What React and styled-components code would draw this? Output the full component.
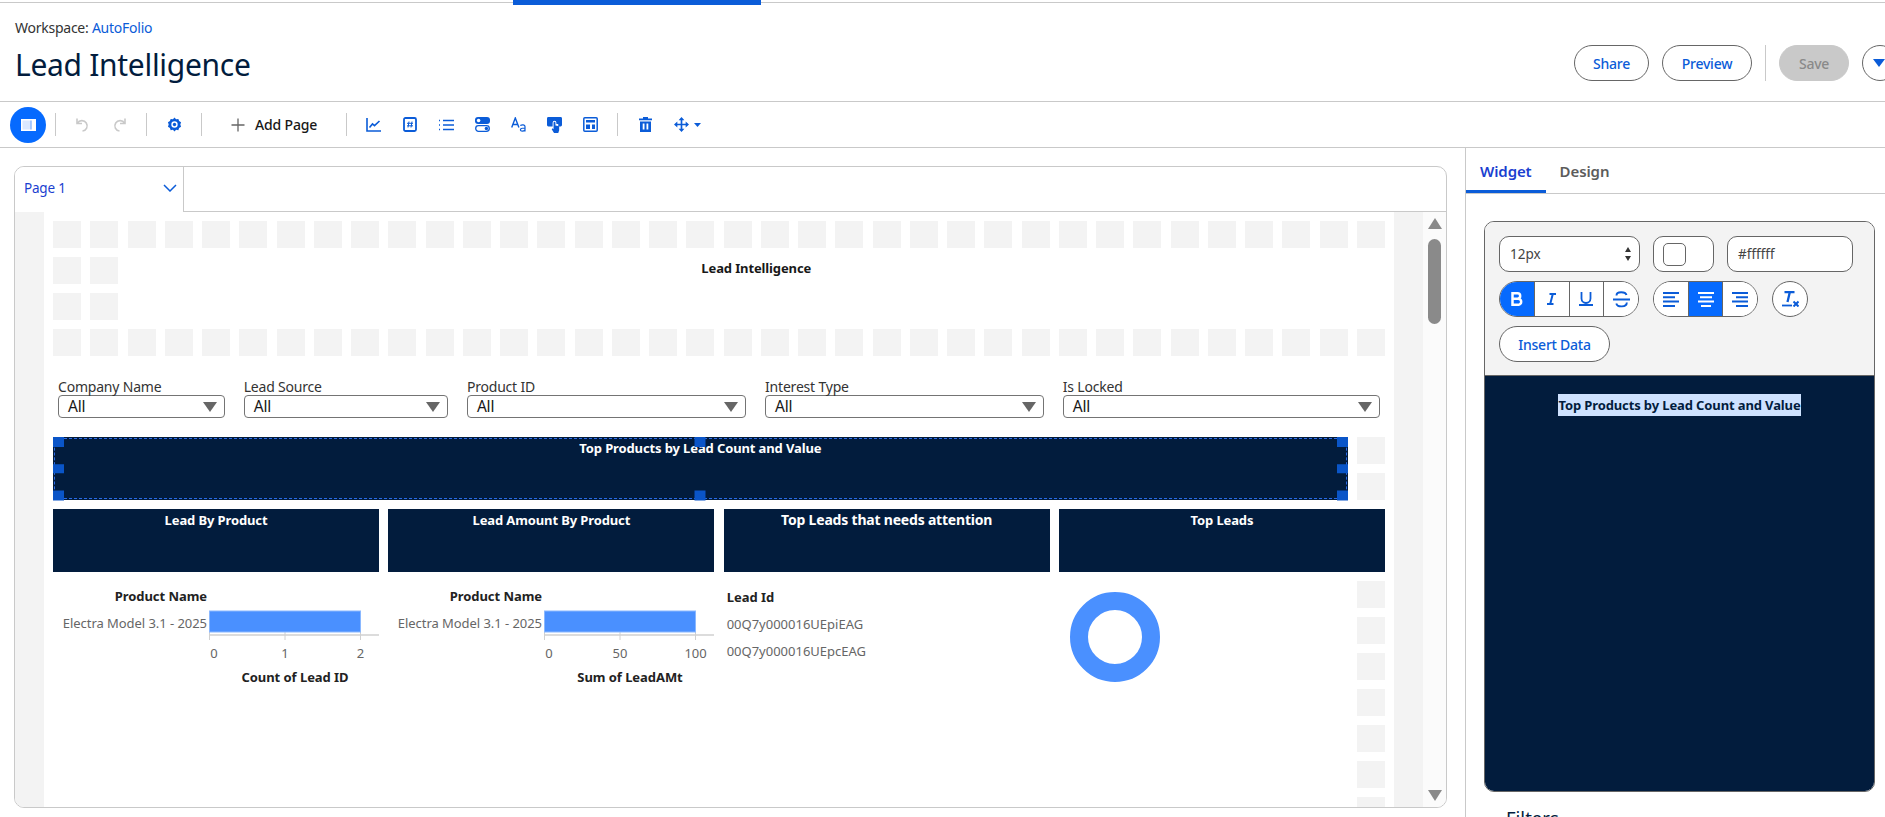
import styled, { createGlobalStyle } from 'styled-components';

const NAVY = '#021c3d';
const BLUE = '#0b5cd8';
const ACTIVE = '#066afe';
const CHART = '#4a90ff';
const CELL = '#f3f3f3';

const GlobalStyle = createGlobalStyle`
  html, body {
    margin: 0;
    height: 100%;
    overflow: hidden;
    background: #fff;
    font-family: "Noto Sans", "Open Sans", "Liberation Sans", sans-serif;
  }
`;

const Page = styled.div`
  width: 1885px;
  height: 817px;
  overflow: hidden;
  display: flex;
  flex-direction: column;
`;

const TopStrip = styled.div`
  height: 2px;
  border-bottom: 1px solid #c9c9c9;
  flex: none;
  padding-left: 513px;
  .bar {
    width: 248px;
    height: 5px;
    background: ${BLUE};
  }
`;

const Header = styled.header`
  height: 99px;
  flex: none;
  box-sizing: border-box;
  border-bottom: 1px solid #c9c9c9;
  display: flex;
  justify-content: space-between;
  padding-left: 15px;
`;

const Crumb = styled.div`
  font-size: 14px;
  letter-spacing: -0.25px;
  color: #333;
  margin-top: 16px;
  line-height: 18px;
  a {
    color: ${BLUE};
  }
`;

const Title = styled.h1`
  font-size: 30px;
  font-weight: 400;
  letter-spacing: -0.3px;
  color: ${NAVY};
  margin: 7px 0 0;
  line-height: 42px;
`;

const Actions = styled.div`
  display: flex;
  align-items: center;
  gap: 13px;
  margin-top: 42px;
  height: 36px;
  flex: none;
`;

const Pill = styled.button`
  height: 36px;
  box-sizing: border-box;
  width: ${(p) => p.$w}px;
  flex: none;
  padding: 0;
  border-radius: 18px;
  border: 1px solid ${(p) => (p.$disabled ? '#c9c9c9' : '#666')};
  background: ${(p) => (p.$disabled ? '#c9c9c9' : '#fff')};
  color: ${(p) => (p.$disabled ? '#8a8a8a' : BLUE)};
  font: 500 14px "Noto Sans", sans-serif;
  letter-spacing: -0.25px;
  display: flex;
  align-items: center;
  justify-content: ${(p) => (p.$start ? 'flex-start' : 'center')};
  padding-left: ${(p) => (p.$start ? '10px' : '0')};
  margin-right: ${(p) => (p.$start ? '-13px' : '0')};
`;

const HeaderSep = styled.div`
  width: 1px;
  height: 36px;
  background: #c9c9c9;
  flex: none;
`;

const Toolbar = styled.div`
  height: 46px;
  flex: none;
  box-sizing: border-box;
  border-bottom: 1px solid #c9c9c9;
  display: flex;
  align-items: center;
`;

const PanelToggle = styled.button`
  width: 36px;
  height: 36px;
  margin-left: 10px;
  padding: 0;
  border: 0;
  border-radius: 50%;
  background: ${ACTIVE};
  display: flex;
  align-items: center;
  justify-content: center;
`;

const ToolSep = styled.div`
  width: 1px;
  height: 23px;
  background: #c9c9c9;
  flex: none;
  margin-left: ${(p) => p.$ml}px;
`;

const ToolIcon = styled.span`
  width: 20px;
  height: 20px;
  flex: none;
  display: flex;
  align-items: center;
  justify-content: center;
  margin-left: ${(p) => p.$ml}px;
  color: ${(p) => p.$color || BLUE};
`;

const AddPage = styled.span`
  font-size: 14px;
  font-weight: 500;
  letter-spacing: -0.15px;
  color: #181818;
  margin-left: 7px;
  width: 91px;
  flex: none;
`;

const Caret = styled.svg`
  margin-left: 3px;
  flex: none;
`;

const Main = styled.div`
  flex: 1;
  min-height: 0;
  display: flex;
`;

const Canvas = styled.section`
  width: 1466px;
  flex: none;
  box-sizing: border-box;
  border-right: 1px solid #c9c9c9;
  padding: 18px 18px 0 14px;
`;

const Card = styled.div`
  height: 642px;
  box-sizing: border-box;
  border: 1px solid #c9c9c9;
  border-radius: 10px;
  overflow: hidden;
  display: flex;
  flex-direction: column;
`;

const TabRow = styled.div`
  height: 45px;
  flex: none;
  box-sizing: border-box;
  border-bottom: 1px solid #c9c9c9;
  display: flex;
`;

const PageTab = styled.div`
  width: 169px;
  height: 45px;
  box-sizing: border-box;
  background: #fff;
  border-right: 1px solid #c9c9c9;
  display: flex;
  align-items: center;
  justify-content: space-between;
  padding: 0 6px 4px 9px;
  font-size: 13.5px;
  letter-spacing: -0.2px;
  color: #1b3fd0;
`;

const Stage = styled.div`
  flex: 1;
  min-height: 0;
  display: flex;
  overflow: hidden;
`;

const Gutter = styled.div`
  width: ${(p) => p.$w}px;
  flex: none;
  background: ${CELL};
`;

const GridArea = styled.div`
  width: 1350px;
  flex: none;
  box-sizing: border-box;
  padding: 9px;
  overflow: hidden;
`;

const GridBoard = styled.div`
  display: grid;
  grid-template-columns: repeat(36, 1fr);
  grid-auto-rows: 27px;
  column-gap: 9.25px;
  row-gap: 9px;
`;

const Cell = styled.div`
  background: ${CELL};
`;

const Widget = styled.div`
  grid-column: ${(p) => p.$col} / span ${(p) => p.$cols};
  grid-row: ${(p) => p.$row} / span ${(p) => p.$rows};
  position: relative;
  min-width: 0;
  background: ${(p) => (p.$dark ? NAVY : '#fff')};
`;

const WidgetTitle = styled.div`
  text-align: center;
  font-weight: 700;
  font-size: ${(p) => p.$size || 13}px;
  letter-spacing: ${(p) => (p.$size ? '-0.2px' : '-0.12px')};
  line-height: 18px;
  padding-top: 2px;
  color: ${(p) => (p.$dark ? '#fff' : '#181818')};
`;

const Dashed = styled.div`
  position: absolute;
  inset: 1px;
  border: 1px dashed #2a6be8;
  pointer-events: none;
`;

const Handle = styled.div`
  position: absolute;
  width: 11px;
  height: 9.5px;
  background: #0a55c8;
  left: ${(p) => p.$x};
  top: ${(p) => p.$y};
  transform: translate(${(p) => p.$tx}, ${(p) => p.$ty});
`;

const FilterRow = styled.div`
  display: flex;
  gap: 18.7px;
  padding: 13px 0 0 5px;
`;

const Filter = styled.label`
  width: ${(p) => p.$w}px;
  flex: none;
  font-size: 14px;
  letter-spacing: -0.2px;
  line-height: 17px;
  color: #333;
  display: block;
`;

const FakeSelect = styled.div`
  height: 23px;
  box-sizing: border-box;
  border: 1px solid #747474;
  border-radius: 4px;
  background: #fff;
  display: flex;
  align-items: center;
  justify-content: space-between;
  padding: 0 7px 0 9px;
  font-size: 15.5px;
  color: #181818;
  i {
    width: 0;
    height: 0;
    border-left: 7px solid transparent;
    border-right: 7px solid transparent;
    border-top: 10px solid #666;
  }
`;

const ChartWrap = styled.svg`
  display: block;
  text {
    font-family: "Noto Sans", sans-serif;
    font-size: 13px;
    letter-spacing: -0.05px;
    fill: #666;
  }
  text.bold {
    font-weight: 700;
    fill: #222;
  }
`;

const Donut = styled.svg`
  display: block;
`;

const LeadTable = styled.div`
  padding: 3px 0 0 3px;
  font-size: 13px;
  color: #666;
  line-height: 27px;
  b {
    color: #222;
    display: block;
  }
`;

const ScrollTrack = styled.div`
  width: 23px;
  flex: none;
  background: #fbfbfb;
  display: flex;
  flex-direction: column;
  align-items: center;
  padding-top: 6px;
  box-sizing: border-box;
  position: relative;
`;

const ScrollUp = styled.div`
  width: 0;
  height: 0;
  border-left: 7px solid transparent;
  border-right: 7px solid transparent;
  border-bottom: 11px solid #8a8a8a;
`;

const ScrollDown = styled(ScrollUp)`
  position: absolute;
  bottom: 6px;
  left: 4.5px;
  border-bottom: 0;
  border-top: 11px solid #8a8a8a;
`;

const ScrollThumb = styled.div`
  width: 13px;
  height: 85px;
  margin-top: 10px;
  border-radius: 7px;
  background: #8a8a8a;
`;

const Side = styled.aside`
  flex: 1;
  min-width: 0;
  display: flex;
  flex-direction: column;
`;

const SideTabs = styled.div`
  height: 46px;
  flex: none;
  box-sizing: border-box;
  border-bottom: 1px solid #c9c9c9;
  display: flex;
`;

const SideTab = styled.div`
  height: 45px;
  box-sizing: border-box;
  padding: 3px 14px 0;
  display: flex;
  align-items: center;
  font-size: 15px;
  font-weight: 600;
  letter-spacing: -0.1px;
  color: ${(p) => (p.$active ? '#1b3fd0' : '#5c5c5c')};
  border-bottom: 3px solid ${(p) => (p.$active ? BLUE : 'transparent')};
`;

const Editor = styled.div`
  margin: 27px 0 0 18px;
  width: 391px;
  height: 571px;
  flex: none;
  box-sizing: border-box;
  border: 1px solid #666;
  border-radius: 10px;
  overflow: hidden;
  display: flex;
  flex-direction: column;
`;

const EditorTools = styled.div`
  height: 154px;
  flex: none;
  box-sizing: border-box;
  background: #f3f3f3;
  border-bottom: 1px solid #666;
  padding: 14px 14px 0;
  display: flex;
  flex-direction: column;
  gap: 9px;
`;

const ToolRow = styled.div`
  display: flex;
  gap: ${(p) => p.$gap || 13}px;
`;

const Field = styled.div`
  width: ${(p) => p.$w}px;
  height: 36px;
  flex: none;
  box-sizing: border-box;
  border: 1px solid #666;
  border-radius: 10px;
  background: #fff;
  display: flex;
  align-items: center;
  justify-content: space-between;
  padding: 0 8px 0 10px;
  font-size: 13.5px;
  color: #444;
`;

const Spinner = styled.div`
  display: flex;
  flex-direction: column;
  gap: 4px;
  i {
    width: 0;
    height: 0;
    border-left: 3px solid transparent;
    border-right: 3px solid transparent;
  }
  i:first-child {
    border-bottom: 5px solid #333;
  }
  i:last-child {
    border-top: 5px solid #333;
  }
`;

const Swatch = styled.div`
  width: 23px;
  height: 23px;
  margin-left: -1px;
  box-sizing: border-box;
  border: 1px solid #666;
  border-radius: 5px;
  background: #fff;
`;

const BtnGroup = styled.div`
  display: flex;
  width: ${(p) => p.$w}px;
  height: 36px;
  flex: none;
  box-sizing: border-box;
  border: 1px solid #666;
  border-radius: 18px;
  overflow: hidden;
  background: #fff;
`;

const GroupBtn = styled.div`
  flex: 1;
  box-sizing: border-box;
  display: flex;
  align-items: center;
  justify-content: center;
  background: ${(p) => (p.$on ? ACTIVE : '#fff')};
  color: ${(p) => (p.$on ? '#fff' : BLUE)};
  & + & {
    border-left: 1px solid #666;
  }
`;

const RoundBtn = styled.div`
  width: 36px;
  height: 36px;
  flex: none;
  box-sizing: border-box;
  border: 1px solid #666;
  border-radius: 50%;
  background: #fff;
  color: ${BLUE};
  display: flex;
  align-items: center;
  justify-content: center;
`;

const Preview = styled.div`
  flex: 1;
  background: ${NAVY};
  text-align: center;
  padding-top: 18px;
  font-size: 13px;
  font-weight: 700;
  letter-spacing: -0.12px;
  line-height: 22px;
  span {
    background: #cfe2ff;
    color: ${NAVY};
    display: inline-block;
    height: 22px;
  }
`;

const SideHeading = styled.div`
  margin: 14px 0 0 40px;
  font-size: 18.5px;
  line-height: 24px;
  color: ${NAVY};
`;

// widgets sit on the 36 column board, empty slots are filled by auto placement
const bars = [
  { col: 1, ticks: ['0', '1', '2'], axis: 'Count of Lead ID' },
  { col: 10, ticks: ['0', '50', '100'], axis: 'Sum of LeadAMt' },
];

const filters = [
  { label: 'Company Name', w: 167 },
  { label: 'Lead Source', w: 204.5 },
  { label: 'Product ID', w: 279.5 },
  { label: 'Interest Type', w: 279 },
  { label: 'Is Locked', w: 317.5 },
];

const headers = [
  { col: 1, text: 'Lead By Product' },
  { col: 10, text: 'Lead Amount By Product' },
  { col: 19, text: 'Top Leads that needs attention', size: 14 },
  { col: 28, text: 'Top Leads' },
];

const handles = [
  ['0', '0', '0', '0'], ['50%', '0', '-50%', '0'], ['100%', '0', '-100%', '0'],
  ['0', '50%', '0', '-50%'], ['100%', '50%', '-100%', '-50%'],
  ['0', '100%', '0', '-100%'], ['50%', '100%', '-50%', '-100%'], ['100%', '100%', '-100%', '-100%'],
];

const line = { stroke: 'currentColor', strokeWidth: 1.6, fill: 'none' };

const BarChart = ({ ticks, axis }) => {
  const xs = [156.5, 232, 307.5];
  return (
    <ChartWrap width="326" height="110" viewBox="0 0 326 110">
      <text className="bold" x="154" y="20" textAnchor="end">Product Name</text>
      <text x="154" y="47" textAnchor="end">Electra Model 3.1 - 2025</text>
      <line x1="156.5" y1="54" x2="326" y2="54" stroke="#d0d0d0" strokeWidth="1.5" />
      {xs.map((x) => (
        <line key={x} x1={x} y1="30" x2={x} y2="59" stroke="#d0d0d0" />
      ))}
      <rect x="156.5" y="30" width="151" height="21" fill={CHART} stroke="#8ab8ff" strokeWidth="1" />
      {ticks.map((t, i) => (
        <text key={t} x={i === 0 ? 161 : xs[i]} y="77" textAnchor="middle">{t}</text>
      ))}
      <text className="bold" x="242" y="101" textAnchor="middle">{axis}</text>
    </ChartWrap>
  );
};

const Board = () => (
  <GridBoard>
    <Widget $col={3} $cols={34} $row={2} $rows={2}>
      <WidgetTitle>Lead Intelligence</WidgetTitle>
    </Widget>
    <Widget $col={1} $cols={36} $row={5} $rows={2}>
      <FilterRow>
        {filters.map((f) => (
          <Filter key={f.label} $w={f.w}>
            {f.label}
            <FakeSelect>All<i /></FakeSelect>
          </Filter>
        ))}
      </FilterRow>
    </Widget>
    <Widget $col={1} $cols={35} $row={7} $rows={2} $dark>
      <WidgetTitle $dark>Top Products by Lead Count and Value</WidgetTitle>
      <Dashed />
      {handles.map(([x, y, tx, ty]) => (
        <Handle key={x + y} $x={x} $y={y} $tx={tx} $ty={ty} />
      ))}
    </Widget>
    {headers.map((h) => (
      <Widget key={h.col} $col={h.col} $cols={9} $row={9} $rows={2} $dark>
        <WidgetTitle $dark $size={h.size}>{h.text}</WidgetTitle>
      </Widget>
    ))}
    {bars.map((b) => (
      <Widget key={b.col} $col={b.col} $cols={9} $row={11} $rows={7}>
        <BarChart ticks={b.ticks} axis={b.axis} />
      </Widget>
    ))}
    <Widget $col={19} $cols={9} $row={11} $rows={7}>
      <LeadTable>
        <b>Lead Id</b>
        <div>00Q7y000016UEpiEAG</div>
        <div>00Q7y000016UEpcEAG</div>
      </LeadTable>
    </Widget>
    <Widget $col={28} $cols={8} $row={11} $rows={7}>
      <Donut width="110" height="110" viewBox="0 0 110 110">
        <circle cx="56" cy="56" r="36" fill="none" stroke={CHART} strokeWidth="18" />
      </Donut>
    </Widget>
    {Array.from({ length: 36 * 3 + 8 + 2 + 2 + 7 }, (_, i) => <Cell key={i} />)}
  </GridBoard>
);

const App = () => (
  <Page>
    <GlobalStyle />
    <TopStrip><div className="bar" /></TopStrip>
    <Header>
      <div>
        <Crumb>Workspace: <a>AutoFolio</a></Crumb>
        <Title>Lead Intelligence</Title>
      </div>
      <Actions>
        <Pill $w={75}>Share</Pill>
        <Pill $w={90}>Preview</Pill>
        <HeaderSep />
        <Pill $w={70} $disabled>Save</Pill>
        <Pill $w={36} $start>
          <svg width="12" height="8" viewBox="0 0 12 8"><path d="M0 0h12L6 8z" fill={BLUE} /></svg>
        </Pill>
      </Actions>
    </Header>
    <Toolbar>
      <PanelToggle>
        <svg width="15" height="12" viewBox="0 0 15 12">
          <rect width="15" height="12" fill="#fff" />
          <rect x="1.5" y="1.5" width="8" height="9" fill="#dbe8ff" />
          <rect x="9.5" y="1.5" width="1" height="9" fill="#5b9bff" />
        </svg>
      </PanelToggle>
      <ToolSep $ml={9} />
      <ToolIcon $color="#c9c9c9" $ml={17}>
        <svg width="15" height="15" viewBox="0 0 15 15"><path {...line} d="M1 1.5v5h5M1.4 6.3A5.2 5.2 0 1 1 6.5 14" /></svg>
      </ToolIcon>
      <ToolIcon $color="#c9c9c9" $ml={15}>
        <svg width="15" height="15" viewBox="0 0 15 15"><path {...line} d="M14 1.5v5H9M13.6 6.3A5.2 5.2 0 1 0 8.5 14" /></svg>
      </ToolIcon>
      <ToolSep $ml={18} />
      <ToolIcon $ml={17}>
        <svg width="15" height="15" viewBox="0 0 16 16" fill="currentColor">
          <path fillRule="evenodd" d="M8 .5l1.7 1.9 2.4-.4.8 2.3 2.1 1.2-.8 2.5.8 2.5-2.1 1.2-.8 2.3-2.4-.4L8 15.5l-1.7-1.9-2.4.4-.8-2.3-2.1-1.2.8-2.5-.8-2.5 2.1-1.2.8-2.3 2.4.4zM8 4.6a3.4 3.4 0 1 0 0 6.8 3.4 3.4 0 0 0 0-6.8z" />
          <circle cx="8" cy="8" r="1.8" />
        </svg>
      </ToolIcon>
      <ToolSep $ml={17} />
      <ToolIcon $color="#666" $ml={26}>
        <svg width="16" height="16" viewBox="0 0 16 16"><path stroke="currentColor" strokeWidth="1.3" d="M8 1.5v13M1.5 8h13" /></svg>
      </ToolIcon>
      <AddPage>Add Page</AddPage>
      <ToolSep $ml={0} />
      <ToolIcon $ml={16}>
        <svg width="15" height="14" viewBox="0 0 15 14"><path {...line} d="M1 0v13h14" /><path {...line} d="M3.5 9.5l3-3.5 2 1.7L13.5 3" /></svg>
      </ToolIcon>
      <ToolIcon $ml={17}>
        <svg width="14" height="15" viewBox="0 0 14 15">
          <rect x="1" y="1" width="12" height="13" rx="1.5" fill="none" stroke="currentColor" strokeWidth="1.8" />
          <path stroke="currentColor" strokeWidth="1" d="M6 4.5l-1 6M9 4.5l-1 6M4 6.3h6M4 8.8h6" />
        </svg>
      </ToolIcon>
      <ToolIcon $ml={16}>
        <svg width="15" height="12" viewBox="0 0 15 12">
          <path stroke="currentColor" strokeWidth="1.6" d="M4 1.5h11M4 6h11M4 10.5h11" />
          <path stroke="currentColor" strokeWidth="1.6" strokeDasharray="1 1" d="M0 1.5h2M0 6h2M0 10.5h2" />
        </svg>
      </ToolIcon>
      <ToolIcon $ml={16}>
        <svg width="15" height="15" viewBox="0 0 15 15">
          <rect x="0" y="0" width="15" height="7" rx="3" fill="currentColor" />
          <circle cx="3.6" cy="3.5" r="1.8" fill="#fff" />
          <rect x="0.7" y="8.7" width="13.6" height="5.6" rx="2.8" fill="none" stroke="currentColor" strokeWidth="1.3" />
          <circle cx="11.4" cy="11.5" r="1.7" fill="currentColor" />
        </svg>
      </ToolIcon>
      <ToolIcon $ml={16}>
        <svg width="15" height="15" viewBox="0 0 15 15">
          <path stroke="currentColor" strokeWidth="1.4" fill="none" d="M0.7 10.5L4.3 1l3.6 9.5M2 7.5h4.6" />
          <path stroke="currentColor" strokeWidth="1.2" fill="none" d="M9.3 8.5c1.8-1.2 4.7-.9 4.7 1.1v5M14 11c-3 0-4.6.3-4.6 1.8 0 1.8 3.4 1.7 4.6 0" />
        </svg>
      </ToolIcon>
      <ToolIcon $ml={16}>
        <svg width="15" height="16" viewBox="0 0 16 17">
          <path fill="currentColor" d="M0 1.5A1.5 1.5 0 0 1 1.5 0h13A1.5 1.5 0 0 1 16 1.5v7A1.5 1.5 0 0 1 14.5 10H12V7.5l-2 0V6a2 2 0 0 0-4 0v4H1.5A1.5 1.5 0 0 1 0 8.5z" />
          <path fill="currentColor" d="M7 6a1 1 0 0 1 2 0v3l4 .8V14l-1 3H7.5L5 13l1 -1 1 1z" />
        </svg>
      </ToolIcon>
      <ToolIcon $ml={16}>
        <svg width="15" height="15" viewBox="0 0 15 15">
          <rect x="0.8" y="0.8" width="13.4" height="13.4" rx="1" fill="none" stroke="currentColor" strokeWidth="1.5" />
          <path fill="currentColor" d="M3 3h9v2.5H3zM3 7.5h4V12H3zM9 7.5h3V12H9z" />
        </svg>
      </ToolIcon>
      <ToolSep $ml={17} />
      <ToolIcon $ml={17}>
        <svg width="13" height="15" viewBox="0 0 13 15" fill="currentColor">
          <path fillRule="evenodd" d="M4 0h5v1.5h4V3.3H0V1.5h4zM1 4.5h11V15H1zM3.7 6.5v6h1.8v-6zM7.5 6.5v6h1.8v-6z" />
        </svg>
      </ToolIcon>
      <ToolIcon $ml={16}>
        <svg width="15" height="15" viewBox="0 0 18 18">
          <path stroke="currentColor" strokeWidth="2" d="M9 2v14M2 9h14" />
          <path fill="currentColor" d="M9 0l3.5 4h-7zM9 18l3.5-4h-7zM0 9l4-3.5v7zM18 9l-4-3.5v7z" />
        </svg>
      </ToolIcon>
      <Caret width="7" height="4" viewBox="0 0 7 4">
        <path d="M0 0h7L3.5 4z" fill={BLUE} />
      </Caret>
    </Toolbar>
    <Main>
      <Canvas>
        <Card>
          <TabRow>
            <PageTab>
              Page 1
              <svg width="14" height="8" viewBox="0 0 14 8"><path d="M1 1l6 6 6-6" fill="none" stroke={BLUE} strokeWidth="1.5" /></svg>
            </PageTab>
          </TabRow>
          <Stage>
            <Gutter $w={29} />
            <GridArea><Board /></GridArea>
            <Gutter $w={29} />
            <ScrollTrack>
              <ScrollUp />
              <ScrollThumb />
              <ScrollDown />
            </ScrollTrack>
          </Stage>
        </Card>
      </Canvas>
      <Side>
        <SideTabs>
          <SideTab $active>Widget</SideTab>
          <SideTab>Design</SideTab>
        </SideTabs>
        <Editor>
          <EditorTools>
            <ToolRow>
              <Field $w={141}>12px<Spinner><i /><i /></Spinner></Field>
              <Field $w={61}><Swatch /></Field>
              <Field $w={126}>#ffffff</Field>
            </ToolRow>
            <ToolRow $gap={14}>
              <BtnGroup $w={140}>
                <GroupBtn $on>
                  <svg width="12" height="14" viewBox="0 0 12 14"><path d="M1.5 1.3h5a2.7 2.7 0 0 1 0 5.4h-5zM1.5 6.8h5.7a3 3 0 0 1 0 6H1.5z" fill="none" stroke="currentColor" strokeWidth="2.5" /></svg>
                </GroupBtn>
                <GroupBtn>
                  <svg width="9" height="12" viewBox="0 0 9 12"><path d="M2.5 1h6.5M0 11h6.5M5.8 1L3.2 11" fill="none" stroke="currentColor" strokeWidth="2" /></svg>
                </GroupBtn>
                <GroupBtn>
                  <svg width="14" height="14" viewBox="0 0 14 14"><path d="M2.5 0v6.5a4.5 4.5 0 0 0 9 0V0" fill="none" stroke="currentColor" strokeWidth="1.8" /><path d="M0 13h14" stroke="currentColor" strokeWidth="1.8" /></svg>
                </GroupBtn>
                <GroupBtn>
                  <svg width="17" height="17" viewBox="0 0 17 17"><path d="M13.5 4C12.5 .5 3.5 0 3.5 4.5M3.3 12.5c1 4 10.5 4 10.5-1" fill="none" stroke="currentColor" strokeWidth="1.9" /><path d="M0 8.5h17" stroke="currentColor" strokeWidth="1.8" /></svg>
                </GroupBtn>
              </BtnGroup>
              <BtnGroup $w={105}>
                <GroupBtn>
                  <svg width="16" height="15" viewBox="0 0 16 15"><path d="M0 1h16M0 5.300h12M0 9.600h16M0 14h12" stroke="currentColor" strokeWidth="2" /></svg>
                </GroupBtn>
                <GroupBtn $on>
                  <svg width="16" height="15" viewBox="0 0 16 15"><path d="M0 1h16M2 5.300h12M0 9.600h16M3 14h10" stroke="currentColor" strokeWidth="2" /></svg>
                </GroupBtn>
                <GroupBtn>
                  <svg width="16" height="15" viewBox="0 0 16 15"><path d="M0 1h16M4 5.300h12M0 9.600h16M4 14h12" stroke="currentColor" strokeWidth="2" /></svg>
                </GroupBtn>
              </BtnGroup>
              <RoundBtn>
                <svg width="17" height="16" viewBox="0 0 17 16">
                  <path d="M2.500 1.200h10M7.800 1.200L5.500 11" fill="none" stroke="currentColor" strokeWidth="2.300" />
                  <path d="M0 14.500h10" stroke="currentColor" strokeWidth="1.800" />
                  <path d="M11.500 10.500l5 5M16.500 10.500l-5 5" stroke="currentColor" strokeWidth="2" />
                </svg>
              </RoundBtn>
            </ToolRow>
            <ToolRow>
              <Pill $w={111}>Insert Data</Pill>
            </ToolRow>
          </EditorTools>
          <Preview><span>Top Products by Lead Count and Value</span></Preview>
        </Editor>
        <SideHeading>Filters</SideHeading>
      </Side>
    </Main>
  </Page>
);

export default App;
